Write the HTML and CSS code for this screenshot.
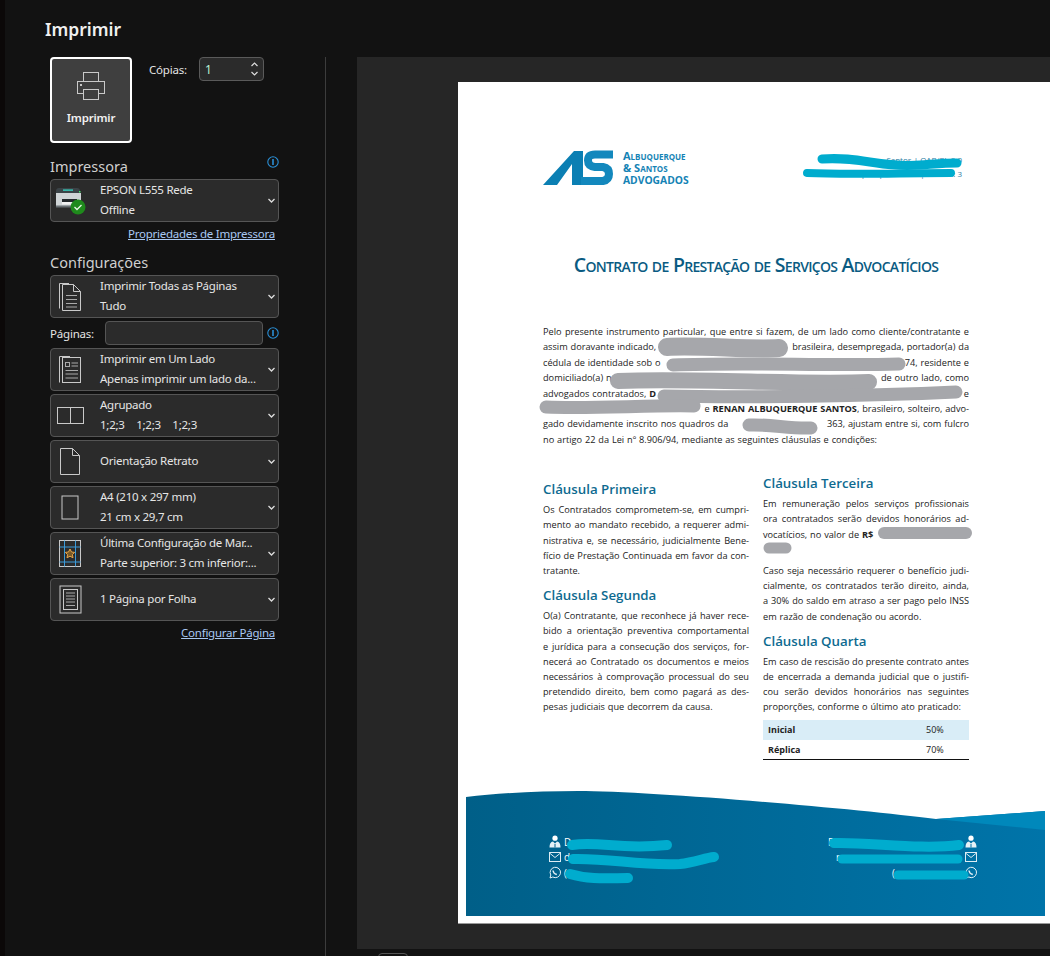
FILE: index.html
```html
<!DOCTYPE html>
<html lang="pt-BR">
<head>
<meta charset="utf-8">
<title>Imprimir</title>
<link rel="stylesheet" href="styles.css">
</head>
<body>
<div class="window">
  <h1 class="title">Imprimir</h1>
  <div class="content">
    <aside class="panel">
      <div class="top-row">
        <button class="print-btn">
          <svg width="28" height="29" viewBox="0 0 28 29" fill="none" stroke="#c9c9c9"><rect x="6.500" y="1.500" width="15" height="9"/><rect x="0.500" y="10.500" width="27" height="12"/><rect x="6.500" y="18.500" width="15" height="10" fill="#3f3f3f"/><rect x="3" y="13" width="2" height="2" fill="#c9c9c9" stroke="none"/></svg>
          <span>Imprimir</span>
        </button>
        <label class="copies-label">Cópias:</label>
        <div class="spinner"><span class="spin-val">1</span>
          <span class="spin-arrows">
            <svg width="7" height="5" viewBox="0 0 7 5" fill="none" stroke="#ddd" stroke-width="1.200"><path d="M.5 4l3-3 3 3"/></svg>
            <svg width="7" height="5" viewBox="0 0 7 5" fill="none" stroke="#ddd" stroke-width="1.200"><path d="M.5 1l3 3 3-3"/></svg>
          </span>
        </div>
      </div>

      <div class="section-head"><h2>Impressora</h2>
        <svg class="info" width="12" height="12" viewBox="0 0 12 12" fill="none"><circle cx="6" cy="6" r="5.200" stroke="#2a8fd6" stroke-width="1.100"/><path d="M6 3v6" stroke="#2a8fd6" stroke-width="1.600"/></svg>
      </div>
      <div class="drop">
        <span class="drop-ico">
          <svg width="32" height="29" viewBox="0 0 32 29"><path d="M2 5q0-3 3-3h18q3 0 3 3v2H2z" fill="#3b4347"/><rect x="9" y="3.500" width="10" height="1.200" fill="#35e6d0"/><rect x="25" y="5" width="1.500" height="1.500" fill="#3fe06a"/><rect x="2" y="7" width="25" height="14" fill="#cfd4d6"/><rect x="8" y="13" width="15" height="4" fill="#23282b"/><rect x="8" y="16" width="15" height="2.500" fill="#f2f2f2"/><rect x="2" y="19.500" width="25" height="2" fill="#6a7175"/><circle cx="24" cy="21" r="7.500" fill="#1f8a1c"/><path d="M20.500 21l2.500 2.500 4.500-4.500" fill="none" stroke="#e9f7e6" stroke-width="1.300"/></svg>
        </span>
        <span class="drop-text"><span>EPSON L555 Rede</span><span>Offline</span></span>
        <svg class="chev" width="7" height="5" viewBox="0 0 7 5" fill="none" stroke="#ddd" stroke-width="1.300"><path d="M.5 1l3 3 3-3"/></svg>
      </div>
      <a class="link link-printer" href="#">Propriedades de Impressora</a>

      <h2 class="config-head">Configurações</h2>
      <div class="drop">
        <span class="drop-ico">
          <svg width="24" height="30" viewBox="0 0 24 30" fill="none" stroke="#c9c9c9"><path d="M1.500 1.500V26.500"/><path d="M1.500 1.500H11"/><path d="M4.500 2.500H15.500L22.500 9.500V28.500H4.500z"/><path d="M15.500 2.500V9.500H22.500"/><path d="M8 13.500H19M8 17.500H19M8 21.500H19M8 25H19" stroke="#aaa"/></svg>
        </span>
        <span class="drop-text"><span>Imprimir Todas as Páginas</span><span>Tudo</span></span>
        <svg class="chev" width="7" height="5" viewBox="0 0 7 5" fill="none" stroke="#ddd" stroke-width="1.300"><path d="M.5 1l3 3 3-3"/></svg>
      </div>
      <div class="pages-row">
        <label class="pages-label">Páginas:</label>
        <div class="pages-input"></div>
        <svg class="info" width="12" height="12" viewBox="0 0 12 12" fill="none"><circle cx="6" cy="6" r="5.200" stroke="#2a8fd6" stroke-width="1.100"/><path d="M6 3v6" stroke="#2a8fd6" stroke-width="1.600"/></svg>
      </div>
      <div class="drop-list">
        <div class="drop">
          <span class="drop-ico">
            <svg width="24" height="29" viewBox="0 0 24 29" fill="none" stroke="#c9c9c9"><path d="M1.500 1.500V27.500M1.500 1.500H12"/><rect x="4.500" y="2.500" width="18" height="25"/><rect x="7.500" y="7.500" width="4" height="4" stroke="#aaa"/><path d="M13.500 8H20M13.500 11H20M7.500 15.500H20M7.500 19H20M7.500 23H20" stroke="#aaa"/></svg>
          </span>
          <span class="drop-text"><span>Imprimir em Um Lado</span><span>Apenas imprimir um lado da...</span></span>
          <svg class="chev" width="7" height="5" viewBox="0 0 7 5" fill="none" stroke="#ddd" stroke-width="1.300"><path d="M.5 1l3 3 3-3"/></svg>
        </div>
        <div class="drop">
          <span class="drop-ico">
            <svg width="29" height="19" viewBox="0 0 29 19" fill="none" stroke="#c9c9c9"><rect x="1.500" y="1.500" width="13" height="16"/><rect x="14.500" y="1.500" width="13" height="16"/></svg>
          </span>
          <span class="drop-text"><span>Agrupado</span><span class="collate"><span>1;2;3</span><span>1;2;3</span><span>1;2;3</span></span></span>
          <svg class="chev" width="7" height="5" viewBox="0 0 7 5" fill="none" stroke="#ddd" stroke-width="1.300"><path d="M.5 1l3 3 3-3"/></svg>
        </div>
        <div class="drop">
          <span class="drop-ico">
            <svg width="22" height="29" viewBox="0 0 22 29" fill="none" stroke="#c9c9c9"><path d="M1.500 1.500H13.500L20.500 8.500V27.500H1.500z"/><path d="M13.500 1.500V8.500H20.500"/></svg>
          </span>
          <span class="drop-text"><span>Orientação Retrato</span></span>
          <svg class="chev" width="7" height="5" viewBox="0 0 7 5" fill="none" stroke="#ddd" stroke-width="1.300"><path d="M.5 1l3 3 3-3"/></svg>
        </div>
        <div class="drop">
          <span class="drop-ico">
            <svg width="18" height="25" viewBox="0 0 18 25" fill="none" stroke="#c9c9c9"><rect x="1" y="1" width="16" height="23"/></svg>
          </span>
          <span class="drop-text"><span>A4 (210 x 297 mm)</span><span>21 cm x 29,7 cm</span></span>
          <svg class="chev" width="7" height="5" viewBox="0 0 7 5" fill="none" stroke="#ddd" stroke-width="1.300"><path d="M.5 1l3 3 3-3"/></svg>
        </div>
        <div class="drop">
          <span class="drop-ico">
            <svg width="24" height="29" viewBox="0 0 24 29" fill="none"><rect x="1.500" y="1.500" width="21" height="26" stroke="#c9c9c9"/><path d="M6.500 1.500V27.500M17.500 1.500V27.500M1.500 8H22.500M1.500 23H22.500" stroke="#3a9ad9"/><path d="M12 10l1.500 3 3.200.4-2.300 2.200.6 3.200-3-1.600-3 1.600.6-3.200-2.300-2.200 3.200-.4z" fill="#7a5a26" stroke="#e8a64a"/></svg>
          </span>
          <span class="drop-text"><span>Última Configuração de Mar...</span><span>Parte superior: 3 cm inferior:...</span></span>
          <svg class="chev" width="7" height="5" viewBox="0 0 7 5" fill="none" stroke="#ddd" stroke-width="1.300"><path d="M.5 1l3 3 3-3"/></svg>
        </div>
        <div class="drop">
          <span class="drop-ico">
            <svg width="23" height="29" viewBox="0 0 23 29" fill="none" stroke="#c9c9c9"><rect x="1" y="1" width="21" height="27"/><rect x="4.500" y="4.500" width="14" height="20"/><path d="M7 8H16M7 11H16M7 14H16M7 17H16M7 20.500H16" stroke="#aaa"/></svg>
          </span>
          <span class="drop-text"><span>1 Página por Folha</span></span>
          <svg class="chev" width="7" height="5" viewBox="0 0 7 5" fill="none" stroke="#ddd" stroke-width="1.300"><path d="M.5 1l3 3 3-3"/></svg>
        </div>
      </div>
      <a class="link link-page" href="#">Configurar Página</a>
    </aside>

    <main class="main">
      <div class="preview">
        <article class="sheet">
          <div class="doc">
            <header class="doc-head">
              <div class="logo">
                <svg width="71" height="36" viewBox="0 0 71 36"><path d="M0 35L31 1H40V35H29V14L14 35z" fill="#0b7fb3"/><path d="M70 4.500H52Q45 4.500 45 10.500Q45 16 52 17H60Q66 18 66 24Q66 30 60 31H38" fill="none" stroke="#1388bd" stroke-width="8"/></svg>
                <div class="logo-text"><span>Albuquerque</span><span>&amp; Santos</span><span class="logo-caps">ADVOGADOS</span></div>
              </div>
              <div class="lawyers"><span>Santos | OAB/PI: 8.0</span><span>Renan Albuquerque Santos | OAB/PI: 3</span></div>
            </header>
            <h2 class="doc-title">Contrato de Prestação de Serviços Advocatícios</h2>
            <section class="intro">
              <p class="ln just">Pelo presente instrumento particular, que entre si fazem, de um lado como cliente/contratante e</p>
              <p class="ln split"><span>assim doravante indicado,</span><span>brasileira, desempregada, portador(a) da</span></p>
              <p class="ln split"><span>cédula de identidade sob o</span><span>74, residente e</span></p>
              <p class="ln split"><span>domiciliado(a) n</span><span>de outro lado, como</span></p>
              <p class="ln split"><span>advogados contratados, <b>D</b></span><span>e</span></p>
              <p class="ln end"><span>e <b>RENAN ALBUQUERQUE SANTOS</b>, brasileiro, solteiro, advo-</span></p>
              <p class="ln split"><span>gado devidamente inscrito nos quadros da</span><span>363, ajustam entre si, com fulcro</span></p>
              <p class="ln">no artigo 22 da Lei nº 8.906/94, mediante as seguintes cláusulas e condições:</p>
            </section>
            <div class="cols">
              <div class="col col-left">
                <h3>Cláusula Primeira</h3>
                <p class="ln just">Os Contratados comprometem-se, em cumpri-</p>
                <p class="ln just">mento ao mandato recebido, a requerer admi-</p>
                <p class="ln just">nistrativa e, se necessário, judicialmente Bene-</p>
                <p class="ln just">fício de Prestação Continuada em favor da con-</p>
                <p class="ln">tratante.</p>
                <h3>Cláusula Segunda</h3>
                <p class="ln just">O(a) Contratante, que reconhece já haver rece-</p>
                <p class="ln just">bido a orientação preventiva comportamental</p>
                <p class="ln just">e jurídica para a consecução dos serviços, for-</p>
                <p class="ln just">necerá ao Contratado os documentos e meios</p>
                <p class="ln just">necessários à comprovação processual do seu</p>
                <p class="ln just">pretendido direito, bem como pagará as des-</p>
                <p class="ln">pesas judiciais que decorrem da causa.</p>
              </div>
              <div class="col">
                <h3 class="first">Cláusula Terceira</h3>
                <p class="ln just">Em remuneração pelos serviços profissionais</p>
                <p class="ln just">ora contratados serão devidos honorários ad-</p>
                <p class="ln">vocatícios, no valor de <b>R$</b></p>
                <p class="ln para-end">&nbsp;</p>
                <p class="ln just">Caso seja necessário requerer o benefício judi-</p>
                <p class="ln just">cialmente, os contratados terão direito, ainda,</p>
                <p class="ln just">a 30% do saldo em atraso a ser pago pelo INSS</p>
                <p class="ln">em razão de condenação ou acordo.</p>
                <h3>Cláusula Quarta</h3>
                <p class="ln just">Em caso de rescisão do presente contrato antes</p>
                <p class="ln just">de encerrada a demanda judicial que o justifi-</p>
                <p class="ln just">cou serão devidos honorários nas seguintes</p>
                <p class="ln">proporções, conforme o último ato praticado:</p>
                <table class="fees">
                  <tr class="fee-a"><th>Inicial</th><td>50%</td></tr>
                  <tr><th>Réplica</th><td>70%</td></tr>
                </table>
              </div>
            </div>
          </div>
          <footer class="doc-foot">
            <svg class="wave" viewBox="466 790 579 126" preserveAspectRatio="none">
              <defs><linearGradient id="wg"><stop offset="0" stop-color="#005f88"/><stop offset="1" stop-color="#0074a9"/></linearGradient></defs>
              <path d="M466 797C500 793 540 791 578 791C650 791 850 808 936 819L1045 811V916H466Z" fill="url(#wg)"/>
              <path d="M936 819L1045 811V830Z" fill="#0088bb"/>
            </svg>
            <div class="contacts">
              <ul class="contact">
                <li><svg class="c-ico" width="12" height="13" viewBox="0 0 12 13"><circle cx="6" cy="3.200" r="2.600" fill="#fff"/><path d="M0.500 12.500Q0.500 7 4 6.500L6 8.500L8 6.500Q11.500 7 11.500 12.500z" fill="#e6f2f7"/><path d="M6 9v3.500" stroke="#005f88"/></svg><span>D</span></li>
                <li><svg class="c-ico" width="12" height="10" viewBox="0 0 12 10" fill="none" stroke="#dcecf3"><rect x=".5" y=".5" width="11" height="9"/><path d="M.5 1L6 5.500L11.500 1"/></svg><span>d</span></li>
                <li><svg class="c-ico" width="12" height="13" viewBox="0 0 12 13" fill="none" stroke="#e6f2f7"><path d="M1 12L1.800 9A5.200 5.200 0 1 1 3.800 11z"/><path d="M4 4.500Q4.300 7.500 7.800 8.500" stroke-width="1.400"/></svg><span>(</span></li>
              </ul>
              <ul class="contact contact-r">
                <li><span class="r-a">Renan</span><svg class="c-ico" width="12" height="13" viewBox="0 0 12 13"><circle cx="6" cy="3.200" r="2.600" fill="#fff"/><path d="M0.500 12.500Q0.500 7 4 6.500L6 8.500L8 6.500Q11.500 7 11.500 12.500z" fill="#e6f2f7"/><path d="M6 9v3.500" stroke="#0072a6"/></svg></li>
                <li><span class="r-b">r</span><svg class="c-ico" width="12" height="10" viewBox="0 0 12 10" fill="none" stroke="#dcecf3"><rect x=".5" y=".5" width="11" height="9"/><path d="M.5 1L6 5.500L11.500 1"/></svg></li>
                <li><span class="r-c">(</span><svg class="c-ico" width="12" height="13" viewBox="0 0 12 13" fill="none" stroke="#e6f2f7"><path d="M1 12L1.800 9A5.200 5.200 0 1 1 3.800 11z"/><path d="M4 4.500Q4.300 7.500 7.800 8.500" stroke-width="1.400"/></svg></li>
              </ul>
            </div>
          </footer>
          <svg class="marks" viewBox="458 82 592 841" fill="none" stroke-linecap="round">
            <g stroke="#a6a7ab">
              <path d="M667 347C700 345 750 350 779 348" stroke-width="18"/>
              <path d="M673 365C740 362 830 366 899 364" stroke-width="13"/>
              <path d="M618 381C700 378 800 385 869 382" stroke-width="16"/>
              <path d="M664 396C750 398 870 396 956 392" stroke-width="13"/>
              <path d="M546 407C590 409 650 405 694 406" stroke-width="13"/>
              <path d="M749 425C770 424 790 429 811 428" stroke-width="13"/>
              <path d="M884 533H966" stroke-width="12"/>
              <path d="M769 548H786" stroke-width="11"/>
            </g>
            <g stroke="#00acce">
              <path d="M822 159C860 156 880 168 920 165C935 164 945 163 957 163" stroke-width="9"/>
              <path d="M807 173C850 175 900 173 951 173" stroke-width="8"/>
              <path d="M572 845C600 841 620 850 667 845" stroke-width="10"/>
              <path d="M573 859C610 858 640 866 680 864C695 862 705 858 714 857" stroke-width="10"/>
              <path d="M570 874C590 880 610 878 628 878" stroke-width="10"/>
              <path d="M834 843C870 842 920 850 959 845" stroke-width="10"/>
              <path d="M842 859H958" stroke-width="9"/>
              <path d="M898 875H964" stroke-width="9"/>
            </g>
          </svg>
        </article>
      </div>
      <div class="status"><span class="tab"></span></div>
    </main>
  </div>
</div>
</body>
</html>
```
FILE: styles.css
```css
* { box-sizing: border-box; }
html, body { margin: 0; padding: 0; }
body { background: #121212; font-family: "Noto Sans", "Open Sans", sans-serif; color: #e4e4e4; }
.window { width: 1050px; height: 956px; overflow: hidden; border-left: 5px solid #0b0808; background: #121212; display: flex; flex-direction: column; }
.title { margin: 0; height: 57px; padding: 16px 0 0 40px; font-size: 17.500px; line-height: 26px; font-weight: 600; color: #f0f0f0; }
.content { display: flex; flex: 1; min-height: 0; }

.panel { width: 321px; border-right: 1px solid #3c3c3c; padding-left: 45px; padding-right: 46px; display: flex; flex-direction: column; flex-shrink: 0; }
.top-row { display: flex; align-items: flex-start; height: 86px; }
.print-btn { width: 82px; height: 86px; background: #3f3f3f; border: 2px solid #fff; border-radius: 4px; color: #f2f2f2; font: 600 11.500px/16px "Noto Sans", sans-serif; letter-spacing: -.2px; padding: 12px 0 0; display: flex; flex-direction: column; align-items: center; gap: 10px; }
.copies-label { margin: 5px 0 0 17px; font-size: 11.500px; letter-spacing: -.2px; line-height: 16px; width: 50px; color: #e4e4e4; }
.spinner { width: 65px; height: 24px; background: #2b2b2b; border: 1px solid #5a5a5a; border-radius: 4px; display: flex; align-items: center; justify-content: space-between; padding: 0 5px 0 5px; }
.spin-val { font-size: 12px; color: #b9f3d8; }
.spin-arrows { display: flex; flex-direction: column; gap: 4px; }
.spin-arrows svg { display: block; }

.section-head { display: flex; justify-content: space-between; margin-top: 13px; height: 23px; }
h2 { margin: 0; }
.section-head h2, .config-head { font-size: 14.500px; line-height: 20px; font-weight: 400; color: #cfcfcf; }
.config-head { margin-top: 10px; height: 23px; }

.drop { height: 43px; background: #2b2b2b; border: 1px solid #555; border-radius: 4px; display: flex; align-items: center; padding-right: 3px; }
.drop-ico { width: 38px; display: flex; justify-content: center; align-items: center; flex-shrink: 0; }
.drop-ico svg { display: block; }
.drop-text { margin-left: 11px; flex: 1; display: flex; flex-direction: column; padding-bottom: 2px; font-size: 11.500px; letter-spacing: -.25px; line-height: 20px; white-space: nowrap; min-width: 0; color: #e6e6e6; }
.collate { display: flex; gap: 11.500px; }
.chev { flex-shrink: 0; }
.drop-list { display: flex; flex-direction: column; gap: 3px; margin-top: 3px; }

.link { align-self: flex-end; margin-right: 4px; color: #a9c8f2; font-size: 11.500px; letter-spacing: -.25px; line-height: 16px; text-decoration: underline; }
.link-printer { margin-top: 4px; }
.link-page { margin-top: 4px; }

.pages-row { display: flex; align-items: center; height: 24px; margin-top: 3px; }
.pages-label { width: 55px; font-size: 11.500px; letter-spacing: -.2px; color: #e4e4e4; }
.pages-input { width: 158px; height: 24px; background: #2b2b2b; border: 1px solid #555; border-radius: 4px; }
.pages-row .info { margin-left: 4px; }

.main { flex: 1; min-width: 0; padding-left: 31px; display: flex; flex-direction: column; }
.preview { width: 693px; height: 892px; background: #262626; padding: 25px 0 0 101px; overflow: hidden; flex-shrink: 0; }
.status { padding-left: 21px; padding-top: 4px; }
.tab { display: block; width: 30px; height: 8px; border: 1px solid #555; border-radius: 4px; }

.sheet { position: relative; width: 592px; height: 842px; background: #fff; border-bottom: 1px solid #999; display: flex; flex-direction: column; font-family: "Open Sans", "Noto Sans", sans-serif; color: #222; }
.doc { padding: 68px 81px 0 85px; flex: 1; min-height: 0; }
.doc-head { display: flex; justify-content: space-between; align-items: flex-start; height: 36px; }
.logo { display: flex; gap: 9px; align-items: flex-start; }
.logo svg { display: block; }
.logo-text { display: flex; flex-direction: column; font-size: 11px; line-height: 12px; font-weight: 700; color: #1583b5; font-variant: small-caps; }
.logo-caps { font-size: 10.300px; font-variant: normal; }
.lawyers { display: flex; flex-direction: column; align-items: flex-end; font-size: 8px; line-height: 14px; color: #2a7ea5; padding: 3px 7px 0 0; }
.doc-title { margin: 67px 0 0; text-align: center; font-size: 19.500px; line-height: 24px; font-weight: 600; font-variant: small-caps; color: #0a5b82; letter-spacing: -.7px; white-space: nowrap; }
.intro { margin-top: 47px; }
.ln { margin: 0; font-size: 9.200px; line-height: 15.400px; white-space: nowrap; word-spacing: .5px; }
.just { text-align: justify; text-align-last: justify; white-space: normal; word-spacing: 0; }
.split { display: flex; justify-content: space-between; }
.end { display: flex; justify-content: flex-end; }
.cols { display: flex; gap: 14px; margin-top: 26px; align-items: flex-start; }
.col { width: 206px; flex-shrink: 0; }
.col .ln { line-height: 15.200px; }
.col-left { padding-top: 6px; }
h3 { margin: 7px 0 3px; font-size: 13.300px; line-height: 20px; font-weight: 600; color: #0e6a90; }
h3.first, .col-left h3:first-child { margin-top: 0; }
.para-end { margin-bottom: 6px; }
.fees { width: 206px; border-collapse: collapse; margin-top: 5px; font-size: 9px; border-bottom: 1px solid #111; }
.fees th { text-align: left; font-weight: 700; padding: 0 0 0 5px; height: 20px; }
.fees td { width: 43px; padding: 0; }
.fee-a { background: #d9edf7; }

.doc-foot { position: relative; height: 126px; margin: 0 5px 7px 8px; padding: 44px 68px 0 83px; flex-shrink: 0; }
.wave { position: absolute; left: 0; top: 0; width: 100%; height: 100%; display: block; }
.contacts { position: relative; display: flex; justify-content: space-between; font-family: "Open Sans", sans-serif; font-size: 10px; color: #fff; }
.contact { list-style: none; margin: 0; padding: 0; display: flex; flex-direction: column; }
.contact li { height: 15.500px; display: flex; align-items: center; gap: 3px; }
.contact-r { align-items: flex-end; }
.r-a { width: 134px; }
.r-b { width: 126px; }
.r-c { width: 70px; }
.c-ico { flex-shrink: 0; }
.marks { position: absolute; left: 0; top: 0; width: 592px; height: 841px; pointer-events: none; }
```
